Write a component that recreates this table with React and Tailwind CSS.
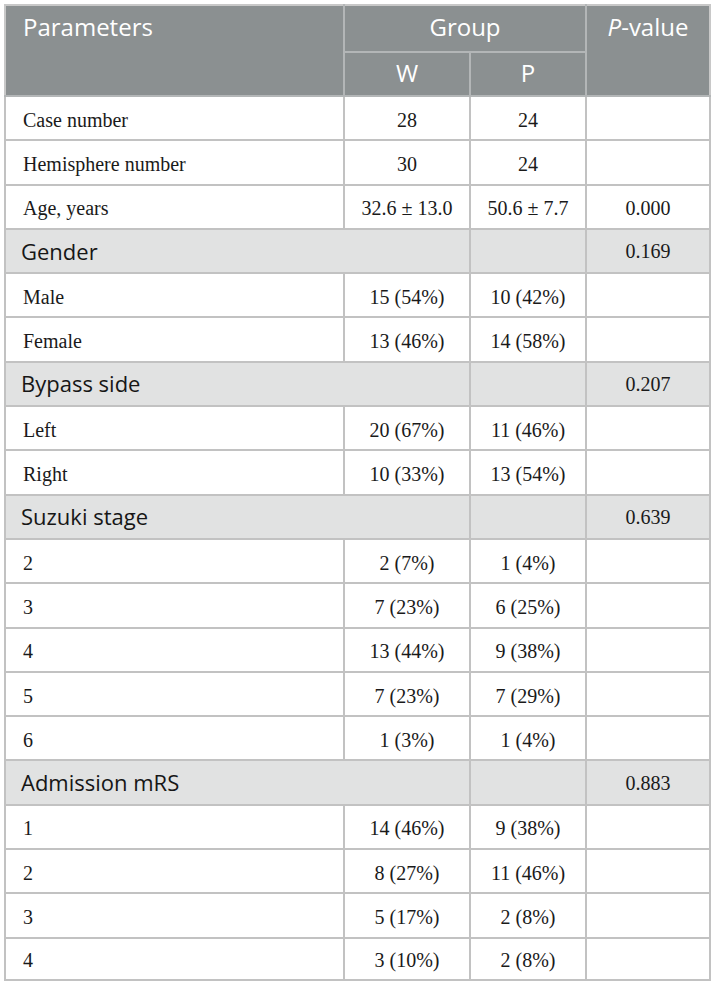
import React from "react";

const rows = [
  { t: "r", l: "Case number", w: "28", p: "24", v: "" },
  { t: "r", l: "Hemisphere number", w: "30", p: "24", v: "" },
  { t: "r", l: "Age, years", w: "32.6 ± 13.0", p: "50.6 ± 7.7", v: "0.000" },
  { t: "s", l: "Gender", v: "0.169" },
  { t: "r", l: "Male", w: "15 (54%)", p: "10 (42%)", v: "" },
  { t: "r", l: "Female", w: "13 (46%)", p: "14 (58%)", v: "" },
  { t: "s", l: "Bypass side", v: "0.207" },
  { t: "r", l: "Left", w: "20 (67%)", p: "11 (46%)", v: "" },
  { t: "r", l: "Right", w: "10 (33%)", p: "13 (54%)", v: "" },
  { t: "s", l: "Suzuki stage", v: "0.639" },
  { t: "r", l: "2", w: "2 (7%)", p: "1 (4%)", v: "" },
  { t: "r", l: "3", w: "7 (23%)", p: "6 (25%)", v: "" },
  { t: "r", l: "4", w: "13 (44%)", p: "9 (38%)", v: "" },
  { t: "r", l: "5", w: "7 (23%)", p: "7 (29%)", v: "" },
  { t: "r", l: "6", w: "1 (3%)", p: "1 (4%)", v: "" },
  { t: "s", l: "Admission mRS", v: "0.883" },
  { t: "r", l: "1", w: "14 (46%)", p: "9 (38%)", v: "" },
  { t: "r", l: "2", w: "8 (27%)", p: "11 (46%)", v: "" },
  { t: "r", l: "3", w: "5 (17%)", p: "2 (8%)", v: "" },
  { t: "r", l: "4", w: "3 (10%)", p: "2 (8%)", v: "", last: true },
];

const serif = "font-['Liberation_Serif',serif] text-[20px] text-[#1a1a1a]";
const sans = "font-['Open_Sans',sans-serif]";
const cellB = "border-2 border-[#c2c2c2]";
const hdr = `${sans} font-normal text-white text-[24px] leading-[30px]`;

export default function App() {
  return (
    <div className="bg-white w-[715px] h-[987px] pt-1 pl-1">
      <table className="table-fixed border-collapse w-[705px]">
        <colgroup>
          <col className="w-[339px]" />
          <col className="w-[126px]" />
          <col className="w-[116px]" />
          <col className="w-[124px]" />
        </colgroup>
        <thead>
          <tr className="h-[47px] bg-[#8b9091]">
            <th
              rowSpan={2}
              className={`${hdr} border-2 border-[#b3b6b7] border-t-[#c8c8c8] border-l-[#c8c8c8] align-top text-left pl-[17px] pt-[6px]`}
            >
              Parameters
            </th>
            <th
              colSpan={2}
              className={`${hdr} border-2 border-[#b3b6b7] border-t-[#c8c8c8] text-center pb-[3px]`}
            >
              Group
            </th>
            <th
              rowSpan={2}
              className={`${hdr} border-2 border-[#b3b6b7] border-t-[#c8c8c8] border-r-[#c8c8c8] align-top text-center pt-[6px]`}
            >
              <span className="italic">P</span>-value
            </th>
          </tr>
          <tr className="h-[44px] bg-[#8b9091]">
            <th className={`${hdr} border-2 border-[#b3b6b7] text-center pb-[2px]`}>W</th>
            <th className={`${hdr} border-2 border-[#b3b6b7] text-center pb-[2px]`}>P</th>
          </tr>
        </thead>
        <tbody>
          {rows.map((r, i) =>
            r.t === "s" ? (
              <tr key={i} className="h-[44.3px] bg-[#e1e2e2]">
                <td colSpan={2} className={`${cellB} ${sans} text-[22px] text-[#161616] pl-[15px]`}>
                  {r.l}
                </td>
                <td className={cellB}></td>
                <td className={`${cellB} ${serif} text-center`}>{r.v}</td>
              </tr>
            ) : (
              <tr key={i} className={`${r.last ? "h-[42px]" : "h-[44.3px]"} bg-white`}>
                <td className={`${cellB} ${serif} pl-[17px] pt-[3px]`}>{r.l}</td>
                <td className={`${cellB} ${serif} text-center pt-[3px]`}>{r.w}</td>
                <td className={`${cellB} ${serif} text-center pt-[3px]`}>{r.p}</td>
                <td className={`${cellB} ${serif} text-center pt-[3px]`}>{r.v}</td>
              </tr>
            )
          )}
        </tbody>
      </table>
    </div>
  );
}
